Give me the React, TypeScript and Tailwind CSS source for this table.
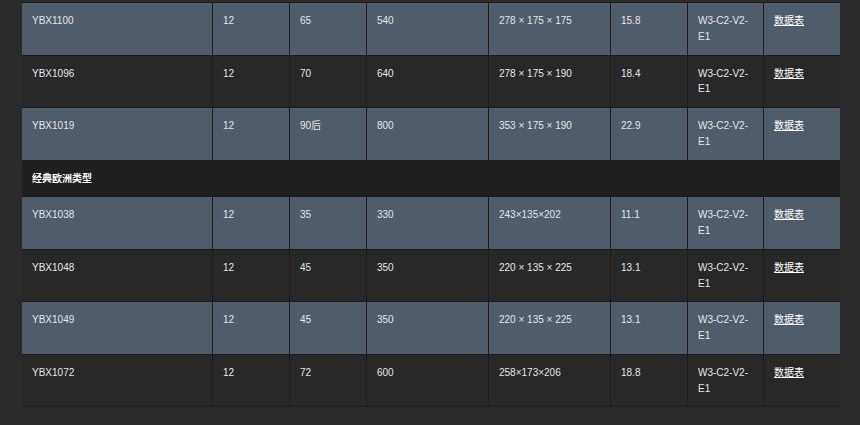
import React from "react";

type Row = { kind: "row"; cells: string[]; striped: boolean } | { kind: "section"; title: string };

const rows: Row[] = [
  { kind: "row", striped: true, cells: ["YBX1100", "12", "65", "540", "278 × 175 × 175", "15.8", "W3-C2-V2-E1"] },
  { kind: "row", striped: false, cells: ["YBX1096", "12", "70", "640", "278 × 175 × 190", "18.4", "W3-C2-V2-E1"] },
  { kind: "row", striped: true, cells: ["YBX1019", "12", "90后", "800", "353 × 175 × 190", "22.9", "W3-C2-V2-E1"] },
  { kind: "section", title: "经典欧洲类型" },
  { kind: "row", striped: true, cells: ["YBX1038", "12", "35", "330", "243×135×202", "11.1", "W3-C2-V2-E1"] },
  { kind: "row", striped: false, cells: ["YBX1048", "12", "45", "350", "220 × 135 × 225", "13.1", "W3-C2-V2-E1"] },
  { kind: "row", striped: true, cells: ["YBX1049", "12", "45", "350", "220 × 135 × 225", "13.1", "W3-C2-V2-E1"] },
  { kind: "row", striped: false, cells: ["YBX1072", "12", "72", "600", "258×173×206", "18.8", "W3-C2-V2-E1"] },
];

export default function App() {
  return (
    <div
      className="w-[860px] h-[425px] overflow-hidden bg-[#2b2b2b] pt-[2px] pl-[22px] text-[10px] leading-[15.75px] text-[#e4e6e8]"
      style={{ fontFamily: '"Liberation Sans", Arial, "Noto Sans CJK SC", sans-serif' }}
    >
      <div className="w-[818px] border-t border-b border-[#1c1c1c]">
        {rows.map((r, i) =>
          r.kind === "section" ? (
            <div key={i} className="border-b border-[#1c1c1c] bg-[#1f1f1f] px-[10px] py-[10px] font-bold text-white">
              {r.title}
            </div>
          ) : (
            <div
              key={i}
              className={`grid grid-cols-[190px_77px_77px_122px_122px_77px_76px_77px] ${
                i === rows.length - 1 ? "" : "border-b border-[#1c1c1c]"
              } ${r.striped ? "bg-[#505c69]" : "bg-[#282828]"}`}
            >
              {r.cells.map((c, j) => (
                <div key={j} className={`p-[10px] ${j > 0 ? "border-l border-[#1c1c1c]" : ""}`}>
                  {c}
                </div>
              ))}
              <div className="border-l border-[#1c1c1c] p-[10px]">
                <a className="text-white underline">数据表</a>
              </div>
            </div>
          )
        )}
      </div>
    </div>
  );
}
